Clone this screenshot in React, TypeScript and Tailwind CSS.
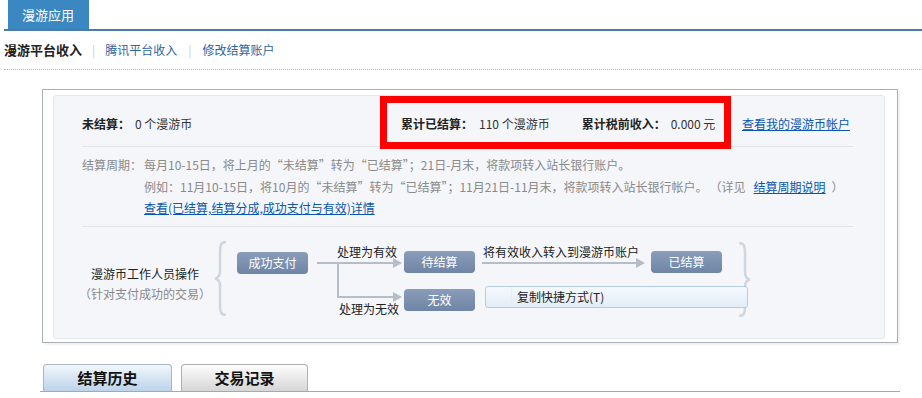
import React from 'react';

const FONT = { fontFamily: '"Noto Sans CJK SC", "Liberation Sans", sans-serif' };

const FlowButton: React.FC<{ label: string; className: string }> = ({ label, className }) => (
  <div
    className={`absolute w-[71px] h-[22px] rounded-[4px] bg-gradient-to-b from-[#8a9dba] to-[#6f85a5] text-white text-[12px] flex items-center justify-center ${className}`}
  >
    {label}
  </div>
);

const Brace: React.FC<{ flip?: boolean; className: string }> = ({ flip, className }) => (
  <svg
    className={`absolute ${className}`}
    width="14"
    height="75"
    viewBox="0 0 14 75"
    style={flip ? { transform: 'scaleX(-1)' } : undefined}
  >
    <path
      d="M12 1 C7 1 6 4 6 10 L6 30 C6 35 4 37 1 37.5 C4 38 6 40 6 45 L6 65 C6 71 7 74 12 74"
      fill="none"
      stroke="#d0d6de"
      strokeWidth="2.5"
    />
  </svg>
);

export default function App() {
  return (
    <div className="w-[922px] h-[398px] bg-white overflow-hidden text-[12px] text-[#333]" style={FONT}>
      {/* top tab */}
      <div className="h-[29px] pl-[8px] flex items-end">
        <div className="w-[81px] h-[29px] bg-[#3b87c2] text-white text-[13px] flex items-center pl-[14px]">
          漫游应用
        </div>
      </div>
      <div className="ml-[4px] h-[2px] bg-[#4a7ca5]" />

      {/* sub nav */}
      <div className="h-[38px] pl-[4px] flex items-center text-[12px]">
        <span className="font-bold text-[13px] text-[#222]">漫游平台收入</span>
        <span className="mx-[10px] text-[#ccc]">|</span>
        <span className="text-[#2e64a3]">腾讯平台收入</span>
        <span className="ml-[11px] mr-[11px] text-[#ccc]">|</span>
        <span className="text-[#2e64a3]">修改结算账户</span>
      </div>
      <div className="ml-[4px] border-t border-dotted border-[#b5b5b5]" />

      {/* main box */}
      <div className="mt-[19px] ml-[42px] w-[856px] h-[254px] border border-[#a9b0b8] shadow-[2px_2px_2px_rgba(0,0,0,0.06)] pt-[5px] pl-[10px] pr-[11px] pb-[3px]">
        <div className="w-[832px] h-[244px] bg-[#f4f6fa] border border-[#e3e7ed] rounded-[3px]">
          {/* summary row */}
          <div className="h-[50px] flex items-start">
            <div className="pl-[28px] pt-[18px] w-[326px] leading-[20px]">
              <span className="font-bold text-[#222]">未结算：</span>
              <span className="ml-[5px]">0 个漫游币</span>
            </div>
            <div className="h-[53px] w-[351px] border-[7px] border-[#ff0000] flex items-start pt-[11px] pl-[14px] leading-[20px]">
              <span className="font-bold text-[#222]">累计已结算：</span>
              <span className="ml-[6px]">110 个漫游币</span>
              <span className="ml-[32px] font-bold text-[#222]">累计税前收入：</span>
              <span className="ml-[5px]">0.000 元</span>
            </div>
            <a className="ml-[11px] pt-[18px] leading-[20px] text-[#0a55b0] underline">查看我的漫游币帐户</a>
          </div>
          <div className="ml-[28px] w-[771px] border-t border-[#e1e5eb]" />

          {/* settlement cycle */}
          <div className="pl-[28px] pt-[7px] pb-[7px] flex leading-[21.5px] text-[#8a8a8a]">
            <div className="w-[62px] shrink-0">结算周期：</div>
            <div>
              <div>每月10-15日，将上月的“未结算”转为“已结算”；21日-月末，将款项转入站长银行账户。</div>
              <div className="whitespace-nowrap">
                例如：11月10-15日，将10月的“未结算”转为“已结算”；11月21日-11月末，将款项转入站长银行帐户。
                <span className="ml-[8px]">（详见</span>
                <a className="ml-[8px] text-[#0a55b0] underline">结算周期说明</a>
                <span className="ml-[6px]">）</span>
              </div>
              <div>
                <a className="text-[#0a55b0] underline">查看(已结算,结算分成,成功支付与有效)详情</a>
              </div>
            </div>
          </div>
          <div className="ml-[28px] w-[771px] border-t border-[#e1e5eb]" />

          {/* flow diagram */}
          <div className="relative h-[112px]">
            <div className="absolute left-[23px] top-[37px] w-[136px] text-center leading-[20px]">
              <div className="text-[#222]">漫游币工作人员操作</div>
              <div className="text-[#8a8a8a]">（针对支付成功的交易）</div>
            </div>
            <Brace className="left-[160px] top-[14px]" />

            <svg className="absolute left-0 top-0" width="832" height="112">
              <g stroke="#b4bdc8" strokeWidth="2" fill="none">
                <path d="M263 36 H341" />
                <path d="M284 36 V70 H341" />
                <path d="M428 36 H584" />
              </g>
              <g fill="#b4bdc8">
                <path d="M339 31 L348 36 L339 41 Z" />
                <path d="M339 65 L348 70 L339 75 Z" />
                <path d="M582 31 L591 36 L582 41 Z" />
              </g>
            </svg>

            <div className="absolute left-[283px] top-[16px] leading-[18px] text-[#222]">处理为有效</div>
            <div className="absolute left-[285px] top-[73px] leading-[18px] text-[#222]">处理为无效</div>
            <div className="absolute left-[429px] top-[16px] leading-[18px] text-[#222]">将有效收入转入到漫游币账户</div>

            <FlowButton label="成功支付" className="left-[183px] top-[25px]" />
            <FlowButton label="待结算" className="left-[350px] top-[24px]" />
            <FlowButton label="无效" className="left-[350px] top-[62px]" />
            <FlowButton label="已结算" className="left-[597px] top-[24px]" />

            <Brace flip className="left-[683px] top-[15px]" />

            {/* context menu tooltip */}
            <div className="absolute left-[431px] top-[59px] w-[263px] h-[22px] rounded-[3px] border border-[#b6cce6] bg-gradient-to-b from-[#f5f9fe] to-[#e3ecf7] flex items-center">
              <div className="w-[26px] h-full border-r border-[#e8eef6]" />
              <span className="ml-[5px] text-[#222]">复制快捷方式(T)</span>
            </div>
          </div>
        </div>
      </div>

      {/* bottom tabs */}
      <div className="mt-[21px] ml-[40px] w-[860px] h-[28px] border-b border-[#a8a8a8] flex items-end gap-[9px] pl-[3px]">
        <div className="w-[129px] h-[27px] rounded-t-[4px] border border-b-0 border-[#a9b6c4] bg-gradient-to-b from-[#f2f7fc] to-[#bcd3ea] flex items-center justify-center font-bold text-[15px] text-[#111]">
          结算历史
        </div>
        <div className="w-[127px] h-[27px] rounded-t-[4px] border border-b-0 border-[#b0b0b0] bg-gradient-to-b from-[#fdfdfd] to-[#d6d6d6] flex items-center justify-center font-bold text-[15px] text-[#111]">
          交易记录
        </div>
      </div>
    </div>
  );
}
